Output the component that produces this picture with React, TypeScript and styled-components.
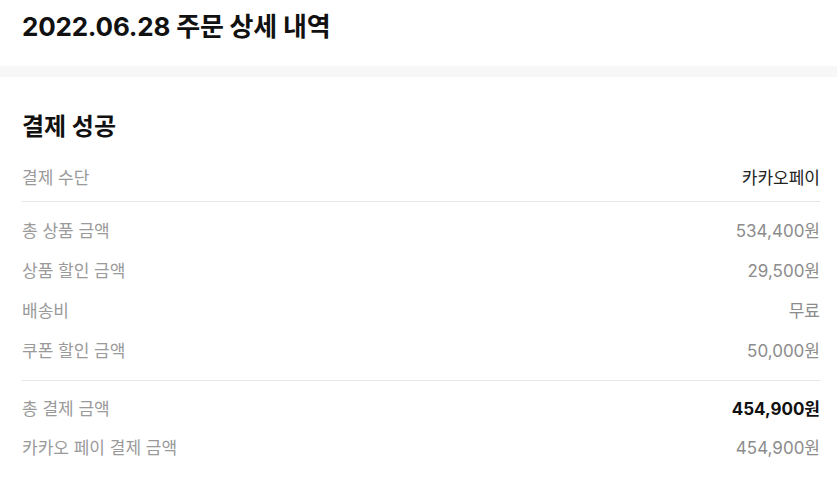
import React from 'react';
import styled, {createGlobalStyle} from 'styled-components';

const GlobalStyle = createGlobalStyle`
    body {
        margin: 0;
        background: #fff;
        font-family: Inter, "Noto Sans CJK KR", sans-serif;
    }
`;

const Header = styled.header`
    height: 66px;
    box-sizing: border-box;
    padding: 12px 22px 0;
`;

const Title = styled.h1`
    margin: 0;
    font-size: 26px;
    line-height: 30px;
    font-weight: 700;
    color: #111;
    letter-spacing: -0.2px;
`;

const Band = styled.div`
    height: 11px;
    background: #f7f7f7;
`;

const Section = styled.section`
    padding: 34px 17px 0 22px;
`;

const Heading = styled.h2`
    margin: 0 0 13px;
    font-size: 24px;
    line-height: 32px;
    font-weight: 700;
    color: #111;
`;

const Group = styled.div<{$top?: number; $bottom?: number; $line?: boolean}>`
    padding: ${(p) => p.$top ?? 10}px 0 ${(p) => p.$bottom ?? 10}px;
    border-bottom: ${(p) => (p.$line ? '1px solid #e6e6e6' : 'none')};
`;

const Row = styled.div<{$h?: number}>`
    display: flex;
    justify-content: space-between;
    align-items: center;
    height: ${(p) => p.$h ?? 40}px;
    font-size: 17px;
`;

const Label = styled.span`
    color: #9a9a9a;
`;

const Value = styled.span<{$tone?: 'dark' | 'bold'}>`
    color: ${(p) => (p.$tone === 'dark' ? '#222' : p.$tone === 'bold' ? '#111' : '#8c8c8c')};
    font-weight: ${(p) => (p.$tone === 'bold' ? 700 : 400)};
`;

const prices = [
    ['총 상품 금액', '534,400원'],
    ['상품 할인 금액', '29,500원'],
    ['배송비', '무료'],
    ['쿠폰 할인 금액', '50,000원'],
];

export default function App() {
    return (
        <>
            <GlobalStyle />
            <Header>
                <Title>2022.06.28 주문 상세 내역</Title>
            </Header>
            <Band />
            <Section>
                <Heading>결제 성공</Heading>
                <Group $top={0} $bottom={5} $line>
                    <Row>
                        <Label>결제 수단</Label>
                        <Value $tone="dark">카카오페이</Value>
                    </Row>
                </Group>
                <Group $top={7} $bottom={11} $line>
                    {prices.map(([label, value]) => (
                        <Row key={label}>
                            <Label>{label}</Label>
                            <Value>{value}</Value>
                        </Row>
                    ))}
                </Group>
                <Group $top={7} $bottom={0}>
                    <Row $h={39}>
                        <Label>총 결제 금액</Label>
                        <Value $tone="bold">454,900원</Value>
                    </Row>
                    <Row $h={39}>
                        <Label>카카오 페이 결제 금액</Label>
                        <Value>454,900원</Value>
                    </Row>
                </Group>
            </Section>
        </>
    );
}
